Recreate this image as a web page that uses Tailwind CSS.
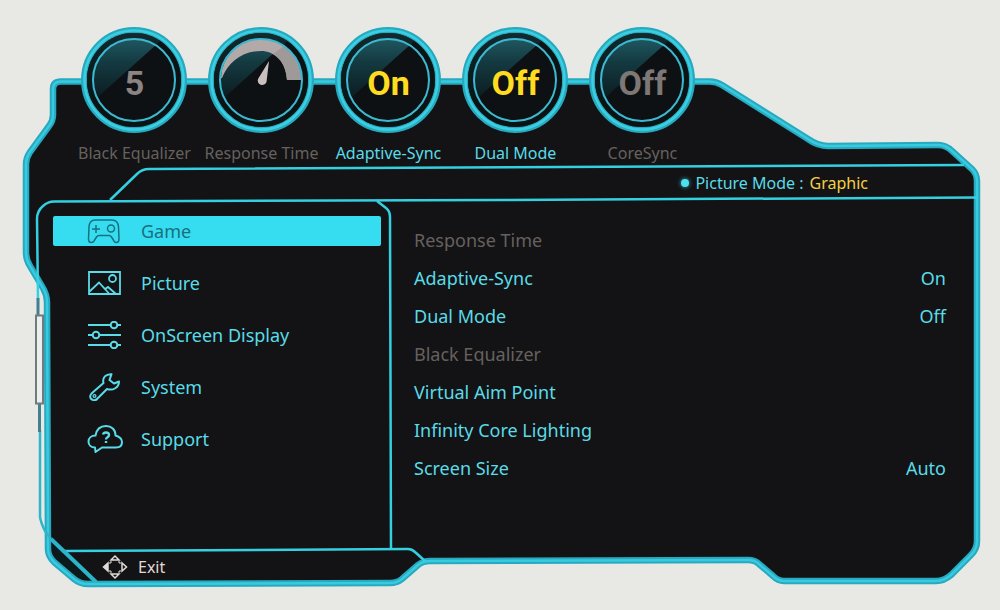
<!DOCTYPE html>
<html lang="en">
<head>
    <meta charset="UTF-8">
    <meta name="viewport" content="width=device-width, initial-scale=1.0">
    <title>Monitor OSD - Game</title>
    <script src="https://cdn.jsdelivr.net/npm/@tailwindcss/browser@4"></script>
</head>
<body class="bg-[#e8e9e5] font-['Noto_Sans',sans-serif] text-[#5adbe8]">
    <!-- Shared drawings -->
    <svg class="absolute size-0" aria-hidden="true">
        <defs>
            <linearGradient id="gloss" x1="0" y1="0" x2="0" y2="1">
                <stop offset="0.05" stop-color="#24616b" />
                <stop offset="0.4" stop-color="#143b42" />
                <stop offset="0.85" stop-color="#0b1b1f" />
            </linearGradient>
            <clipPath id="lens"><circle cx="53" cy="53" r="47" /></clipPath>
            <g id="dial" fill="none">
                <circle cx="53" cy="53" r="50" fill="#0e1113" stroke="#27a9bf" stroke-width="6" />
                <circle cx="53" cy="53" r="49.500" stroke="#3ccfe2" stroke-width="2.500" />
                <path d="M0 0H95L0 85Z" fill="url(#gloss)" clip-path="url(#lens)" />
                <circle cx="53" cy="53" r="44.500" stroke="#0b1416" stroke-opacity="0.7" stroke-width="5" />
            </g>
        </defs>
    </svg>

    <main class="relative isolate flex min-h-[610px] w-full flex-col">
        <!-- Frame -->
        <svg class="absolute inset-0 -z-10 h-full w-full" viewBox="0 0 1000 610" preserveAspectRatio="none" fill="none" aria-hidden="true">
            <defs>
                <path id="outline" d="M61 81.500H710Q716 81.500 722 85L808 139Q818 146 828 146L938 145Q946 145 952 151L972 169Q977 174 977 181V541Q977 549 971 555L951 575Q944 581 936 581H784Q778 581 773 576L759 564Q755 560 748 560L430 561Q423 561 418 565L402 579Q397 583 390 583L88 584Q80 584 74 579L54 562Q48 556 48 549L47 302Q47 295 43 288L30 266Q26 260 26 252V164Q26 158 30 152L49 126Q53 121 53 115V89Q53 81.500 61 81.500Z" />
            </defs>
            <use href="#outline" fill="#131315" stroke="#27a9bf" stroke-width="6.500" />
            <use href="#outline" stroke="#38cbdf" stroke-width="2.500" />
            <path d="M52 543V549Q52 555 57 559L77 576Q82 580 89 580Z" fill="#0b1a1d" />
            <!-- inner lines -->
            <g stroke="#34cfe1" stroke-width="2.500">
                <path d="M110 200L137 174Q142 169 149 169L964 165" />
                <path d="M977 197.500L500 200L54 201.500Q48 201.500 43 206Q37 211 37 219L38 300" />
                <path d="M377 201L386 208Q390 211 390 217L391 548" />
                <path d="M62 551L408 549Q412 549 415 552L425 561" />
                <path d="M40 430V517Q41 523 45 531L51 539" stroke="#2fb4c9" />
                <path d="M51 539L96 582" stroke="#2bb4ca" stroke-width="4" />
            </g>
            <!-- grip on the left edge -->
            <path d="M38 298V315M39.500 404V432" stroke="#41808c" stroke-width="3" />
            <rect x="36" y="315.500" width="7" height="88" fill="#eceeed" stroke="#6f7b7c" stroke-width="2" />
        </svg>

        <!-- Dials -->
        <header class="px-[7.1%] pt-[27px]">
            <ul class="grid w-[74%] grid-cols-5 text-center text-base leading-6">
                <li class="flex flex-col items-center gap-2 text-[#66615e]">
                    <div class="grid size-[106px] place-items-center">
                        <svg class="col-start-1 row-start-1 size-full" viewBox="0 0 106 106" fill="none" aria-hidden="true">
                            <use href="#dial" />
                            <circle cx="53" cy="53" r="41" stroke="#3cb9d0" stroke-width="2" />
                        </svg>
                        <b class="col-start-1 row-start-1 pt-1.5 font-['Roboto',sans-serif] text-[34px] text-[#8b8483]">5</b>
                    </div>
                    <span class="whitespace-nowrap">Black Equalizer</span>
                </li>
                <li class="flex flex-col items-center gap-2 text-[#66615e]">
                    <div class="grid size-[106px] place-items-center">
                        <svg class="col-start-1 row-start-1 size-full" viewBox="0 0 106 106" fill="none" aria-hidden="true">
                            <use href="#dial" />
                            <path d="M13 51A40 40 0 0 1 93 53H79C78 34 66 24 53 24C33 24 20 36 14 51Z" fill="#b3a9a8" />
                            <path d="M76 19L81 24L86 30L93 46V53H79C78 40 73 31 65 27Z" fill="#a0999a" />
                            <path d="M61 34L58.500 55A4.500 4.500 0 1 1 50 52Z" fill="#c9bfbe" />
                            <circle cx="53" cy="53" r="41" stroke="#3cb9d0" stroke-width="2" />
                        </svg>
                    </div>
                    <span class="whitespace-nowrap">Response Time</span>
                </li>
                <li class="flex flex-col items-center gap-2">
                    <div class="grid size-[106px] place-items-center">
                        <svg class="col-start-1 row-start-1 size-full" viewBox="0 0 106 106" fill="none" aria-hidden="true">
                            <use href="#dial" />
                            <circle cx="53" cy="53" r="41" stroke="#3cb9d0" stroke-width="2" />
                        </svg>
                        <b class="col-start-1 row-start-1 pt-1.5 font-['Roboto',sans-serif] text-[34px] text-[#ffdc1f]">On</b>
                    </div>
                    <span class="whitespace-nowrap">Adaptive-Sync</span>
                </li>
                <li class="flex flex-col items-center gap-2">
                    <div class="grid size-[106px] place-items-center">
                        <svg class="col-start-1 row-start-1 size-full" viewBox="0 0 106 106" fill="none" aria-hidden="true">
                            <use href="#dial" />
                            <circle cx="53" cy="53" r="41" stroke="#3cb9d0" stroke-width="2" />
                        </svg>
                        <b class="col-start-1 row-start-1 pt-1.5 font-['Roboto',sans-serif] text-[34px] text-[#ffdc1f]">Off</b>
                    </div>
                    <span class="whitespace-nowrap">Dual Mode</span>
                </li>
                <li class="flex flex-col items-center gap-2 text-[#66615e]">
                    <div class="grid size-[106px] place-items-center">
                        <svg class="col-start-1 row-start-1 size-full" viewBox="0 0 106 106" fill="none" aria-hidden="true">
                            <use href="#dial" />
                            <circle cx="53" cy="53" r="41" stroke="#3cb9d0" stroke-width="2" />
                        </svg>
                        <b class="col-start-1 row-start-1 pt-1.5 font-['Roboto',sans-serif] text-[34px] text-[#7d7776]">Off</b>
                    </div>
                    <span class="whitespace-nowrap">CoreSync</span>
                </li>
            </ul>
        </header>

        <!-- Picture mode -->
        <p class="flex h-9 items-center justify-end gap-1.5 pr-[13.2%] text-base leading-6">
            <span class="size-2 rounded-full bg-[#4fe0ee] shadow-[0_0_4px_#2fb7c8]"></span>
            <span>Picture Mode :</span>
            <span class="text-[#f3cf45]">Graphic</span>
        </p>

        <div class="flex flex-1">
            <!-- Main menu -->
            <nav class="flex w-[39%] flex-col gap-[22px] pt-[15px] pr-[9px] pl-[53px] text-lg">
                <button type="button" class="flex h-[30px] items-center gap-[18px] rounded-xs bg-[#36ddf1] pl-[34px] text-[#17707f]">
                    <svg class="h-7 w-9" viewBox="0 0 36 28" fill="none" stroke="currentColor" stroke-width="1.500" aria-hidden="true">
                        <path d="M8 3H25Q31 3 31.500 10L32 22Q32 25.500 29.500 25.500Q28 25.500 27 24L24.500 20Q23.500 18.500 22 18.500H12Q10.500 18.500 9.500 20L7 24Q6 25.500 4 25.500Q1.500 25.500 1.500 22L2 10Q2.500 3 8 3Z" />
                        <path d="M9 8V16M5 12H13" />
                        <circle cx="24" cy="11.500" r="3.500" />
                    </svg>
                    Game
                </button>
                <button type="button" class="flex h-[30px] items-center gap-[18px] pl-[34px]">
                    <svg class="h-7 w-9" viewBox="0 0 36 28" fill="none" stroke="currentColor" stroke-width="1.800" aria-hidden="true">
                        <path d="M2 3H33V25H2ZM2 23L12 13.500L18 20L21 18L29 25M18 20L22 24.500" />
                        <circle cx="25.500" cy="9.500" r="3.500" />
                    </svg>
                    Picture
                </button>
                <button type="button" class="flex h-[30px] items-center gap-[18px] pl-[34px]">
                    <svg class="h-7 w-9" viewBox="0 0 36 28" fill="none" stroke="currentColor" stroke-width="2" aria-hidden="true">
                        <path d="M1 4H23M31 4H34M1 14H5M13 14H34M1 24H23M31 24H34" />
                        <circle cx="27" cy="4" r="3.300" />
                        <circle cx="9" cy="14" r="3.300" />
                        <circle cx="27" cy="24" r="3.300" />
                    </svg>
                    OnScreen Display
                </button>
                <button type="button" class="flex h-[30px] items-center gap-[18px] pl-[34px]">
                    <svg class="h-7 w-9" viewBox="0 0 36 28" fill="none" stroke="currentColor" stroke-width="2" stroke-linejoin="round" aria-hidden="true">
                        <path d="M24.500 1.200C19 .8 15 4.500 16.500 10L4.500 20.500C2.500 23 3 25.500 5 26.500C7 27.800 9 27.300 10.500 25.500L20 16C26 18 32 14.500 32 8.500L27 10.500L22.500 7Z" />
                        <circle cx="7.500" cy="23" r="1.400" stroke-width="1.300" />
                    </svg>
                    System
                </button>
                <button type="button" class="flex h-[30px] items-center gap-[18px] pl-[34px]">
                    <svg class="h-7 w-9" viewBox="0 0 36 28" fill="none" stroke="currentColor" stroke-width="2" stroke-linejoin="round" aria-hidden="true">
                        <path d="M8.500 27L8 22.500C4 22.500 1.500 20 1.500 16.500C1.500 13 4.500 10.500 8.500 10.500C9.500 4.500 13.500 1 19 1C24.500 1 28.500 4.500 28.500 10.500C32 11.500 35 14 35 17C35 20.500 32.500 22.500 29 22.500H15Z" />
                        <path d="M16 9.500Q16.500 7.500 19 7.500Q22 7.500 22 10Q22 11.500 20.500 12.200Q19 13 19 14.500M19 16V18" stroke-width="2.400" />
                    </svg>
                    Support
                </button>
            </nav>

            <!-- Game settings -->
            <ul class="flex-1 pt-5 pr-[54px] pl-6 text-lg leading-[38px]">
                <li><button type="button" disabled class="flex w-full justify-between text-[#66615e]">Response Time</button></li>
                <li><button type="button" class="flex w-full justify-between">Adaptive-Sync <span>On</span></button></li>
                <li><button type="button" class="flex w-full justify-between">Dual Mode <span>Off</span></button></li>
                <li><button type="button" disabled class="flex w-full justify-between text-[#66615e]">Black Equalizer</button></li>
                <li><button type="button" class="flex w-full justify-between">Virtual Aim Point</button></li>
                <li><button type="button" class="flex w-full justify-between">Infinity Core Lighting</button></li>
                <li><button type="button" class="flex w-full justify-between">Screen Size <span>Auto</span></button></li>
            </ul>
        </div>

        <!-- Key guide -->
        <footer class="pb-[27px] pl-[102px]">
            <button type="button" class="flex h-8 items-center gap-2.5 text-base text-[#e2dad6]">
                <svg class="size-[26px]" viewBox="0 0 26 26" fill="none" stroke="currentColor" stroke-width="1.500" aria-hidden="true">
                    <path d="M9 6H17L13 2ZM9 20H17L13 24ZM20 9V17L24.500 13Z" />
                    <path d="M6 9V17L1.500 13Z" fill="currentColor" />
                    <path d="M8 10V8H10M16 8H18V10M18 16V18H16M10 18H8V16" stroke-width="1" />
                </svg>
                Exit
            </button>
        </footer>
    </main>
</body>
</html>
